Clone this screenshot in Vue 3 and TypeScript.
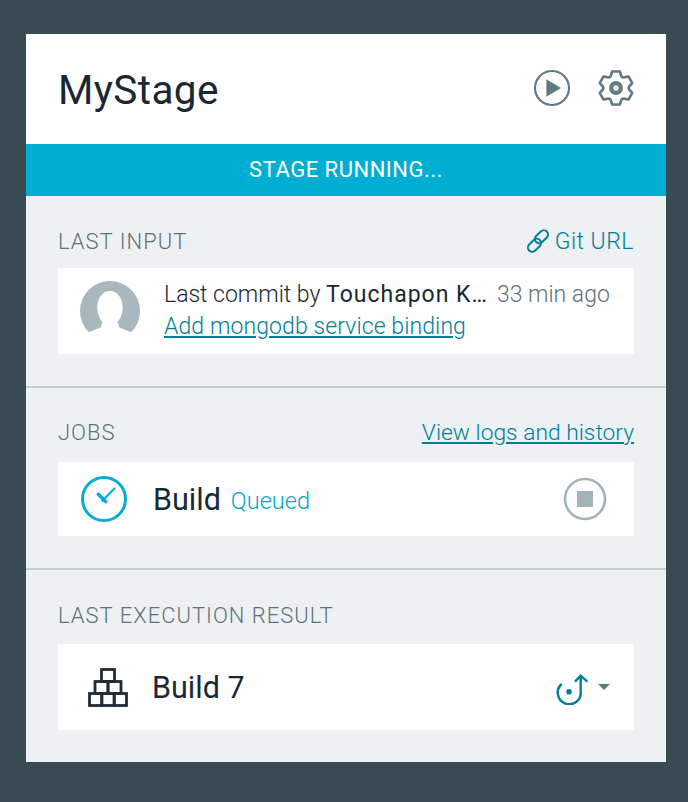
<script setup lang="ts">
const title: string = 'MyStage'

function gearPath(cx: number, cy: number, outer: number, inner: number): string {
  const pts: string[] = []
  for (let i = 0; i < 6; i++) {
    const a = -90 + i * 60
    const offsets: [number, number][] = [[-25, inner], [-13, outer], [13, outer], [25, inner]]
    for (const [d, r] of offsets) {
      const t = ((a + d) * Math.PI) / 180
      pts.push(`${(cx + r * Math.cos(t)).toFixed(2)} ${(cy + r * Math.sin(t)).toFixed(2)}`)
    }
  }
  return 'M' + pts.join('L') + 'Z'
}
const gear = gearPath(19, 19, 17, 12.8)
</script>

<template>
  <div class="page">
    <main class="card">
      <header class="head">
        <h1>{{ title }}</h1>
        <div class="head-icons">
          <svg width="38" height="38" viewBox="0 0 38 38"><circle cx="19" cy="19" r="17" fill="none" stroke="#5f7a80" stroke-width="2.2"/><path d="M13.400 10.300L28 19L13.400 27.700Z" fill="#5f7a80"/></svg>
          <svg width="38" height="38" viewBox="0 0 38 38"><path :d="gear" fill="none" stroke="#5f7a80" stroke-width="2.600" stroke-linejoin="round"/><circle cx="19" cy="19" r="4.800" fill="none" stroke="#5f7a80" stroke-width="4.200"/></svg>
        </div>
      </header>
      <div class="banner">STAGE RUNNING...</div>

      <section class="sec sec-input">
        <div class="sec-head">
          <span class="label">LAST INPUT</span>
          <a class="link plain">
            <svg width="24" height="24" viewBox="0 0 24 24" fill="none" stroke="#007f99" stroke-width="2"><rect x="8" y="3.500" width="15" height="8.500" rx="4.250" transform="rotate(-45 15.500 7.750)"/><rect x="1" y="12" width="15" height="8.500" rx="4.250" transform="rotate(-45 8.500 16.250)"/></svg>
            <span class="git">Git URL</span>
          </a>
        </div>
        <div class="row row-commit">
          <svg class="avatar" width="60" height="60" viewBox="0 0 60 60"><path d="M8.800 51.200A30 30 0 1 1 51.200 51.200L39.500 46.500 37.500 41C41 37 43 31 42.700 25 42 16 37 10 30 10S18 16 17.300 25C17 31 19 37 22.500 41L20.500 46.500Z" fill="#a9b8bf"/></svg>
          <div class="commit">
            <div class="commit-line">
              <span class="who">Last commit by <span class="name">Touchapon K…</span></span>
              <span class="when">33 min ago</span>
            </div>
            <a class="link msg">Add mongodb service binding</a>
          </div>
        </div>
      </section>

      <section class="sec sec-jobs">
        <div class="sec-head">
          <span class="label">JOBS</span>
          <a class="link logs">View logs and history</a>
        </div>
        <div class="row row-job">
          <svg width="48" height="48" viewBox="0 0 48 48" fill="none" stroke="#00aed4"><circle cx="24" cy="24" r="21.500" stroke-width="3"/><path d="M21.700 26.500L35 13" stroke-width="2"/><path d="M17.300 18.200L26.700 27.500" stroke-width="3.400"/></svg>
          <span class="job-name">Build</span>
          <span class="queued">Queued</span>
          <svg class="stop" width="44" height="44" viewBox="0 0 44 44"><circle cx="22" cy="22" r="20" fill="none" stroke="#a3b4b9" stroke-width="2.600"/><rect x="14" y="14" width="16" height="16" fill="#a3b4b9"/></svg>
        </div>
      </section>

      <section class="sec sec-result">
        <div class="sec-head">
          <span class="label">LAST EXECUTION RESULT</span>
        </div>
        <div class="row row-result">
          <svg width="40" height="40" viewBox="0 0 40 40" fill="none" stroke="#1f2d38" stroke-width="2.800"><rect x="13.500" y="2.500" width="13" height="12"/><rect x="7" y="14.500" width="13" height="12"/><rect x="20" y="14.500" width="13" height="12"/><rect x="1.500" y="26.500" width="12.300" height="12"/><rect x="13.800" y="26.500" width="12.400" height="12"/><rect x="26.200" y="26.500" width="12.300" height="12"/></svg>
          <span class="result-name">Build 7</span>
          <div class="actions">
            <svg width="32" height="32" viewBox="0 0 32 32" fill="none" stroke="#007f99" stroke-width="2.400"><path d="M5.700 11A11.500 11.500 0 1 0 24.700 18.700V2.700"/><path d="M19 8.700L24.700 2.700L31.300 8.700"/><circle cx="13" cy="18.700" r="2.800" fill="#007f99" stroke="none"/></svg>
            <span class="caret"></span>
          </div>
        </div>
      </section>
    </main>
  </div>
</template>

<style>
html, body { margin: 0; background: #3a4a52; }
</style>

<style scoped>
.page {
  width: 688px;
  height: 802px;
  box-sizing: border-box;
  padding: 34px 22px 40px 26px;
  background: #3a4a52;
  font-family: Roboto, "Liberation Sans", Arial, sans-serif;
  font-weight: 300;
  color: #1a2833;
}
.card { width: 640px; height: 728px; background: #edf1f4; display: flex; flex-direction: column; }
.head {
  height: 110px;
  background: #fff;
  display: flex;
  align-items: center;
  justify-content: space-between;
  padding: 0 31px 0 32px;
}
h1 { margin: 1px 0 0; font-size: 40.500px; font-weight: 400; letter-spacing: 0.400px; }
.head-icons { display: flex; gap: 26px; margin-bottom: 2px; }
.banner {
  height: 52px;
  line-height: 52px;
  background: #00aed4;
  color: #fff;
  text-align: center;
  font-size: 22px;
  font-weight: 400;
  letter-spacing: 0.500px;
}
.sec { padding: 0 32px; box-sizing: border-box; }
.sec-input { height: 192px; border-bottom: 2px solid #c3cfd1; }
.sec-jobs { height: 182px; border-bottom: 2px solid #c3cfd1; }
.sec-result { flex: 1; }
.sec-head { display: flex; align-items: center; justify-content: space-between; box-sizing: border-box; height: 72px; padding-top: 18px; }
.sec-jobs .sec-head { height: 74px; padding-top: 14px; }
.sec-result .sec-head { height: 74px; padding-top: 16px; }
.label { font-size: 22px; color: #5f7277; letter-spacing: 1px; }
.link { color: #007f99; font-size: 23px; text-decoration: underline; }
.logs { font-size: 22.800px; }
.plain { text-decoration: none; display: flex; align-items: center; gap: 5px; }
.git { letter-spacing: 0.500px; }
.row { background: #fff; display: flex; align-items: center; }
.row-commit { height: 86px; padding-left: 22px; }
.avatar { flex: none; }
.commit { margin-left: 24px; }
.commit-line { display: flex; gap: 9px; font-size: 23px; line-height: 32px; white-space: nowrap; }
.name { font-weight: 400; letter-spacing: 1px; }
.when { color: #5f7277; }
.msg { display: block; line-height: 32px; letter-spacing: 0.100px; }
.row-job { height: 74px; padding-left: 22px; padding-right: 27px; }
.job-name { font-size: 30.500px; font-weight: 400; margin-left: 25px; }
.queued { font-size: 23.500px; color: #00a6cb; margin-left: 10px; margin-top: 3px; }
.stop { margin-left: auto; }
.row-result { height: 86px; padding-left: 30px; padding-right: 24px; }
.result-name { font-size: 30.500px; font-weight: 400; margin-left: 24px; }
.actions { margin-left: auto; display: flex; align-items: center; gap: 10px; }
.actions svg { margin-top: 4px; }
.caret { border-left: 6px solid transparent; border-right: 6px solid transparent; border-top: 6px solid #5f7a80; }
</style>
